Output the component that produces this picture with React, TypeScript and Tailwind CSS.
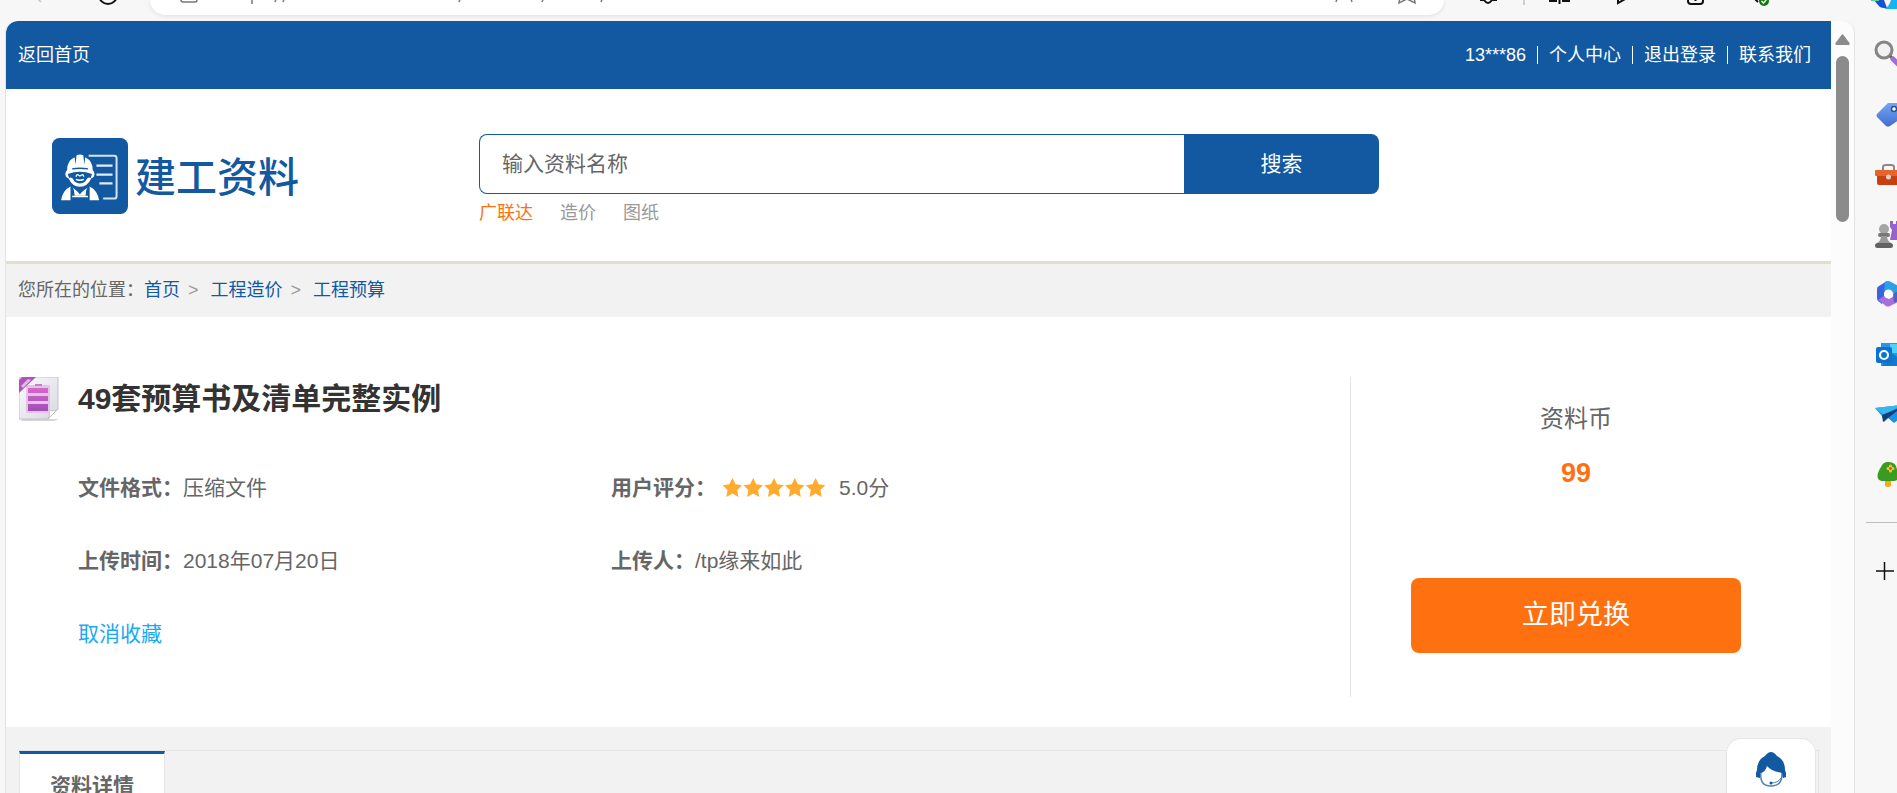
import { ReactNode } from 'react'

const ACCOUNT_LINKS = ['个人中心', '退出登录', '联系我们']
const HOT_WORDS = ['广联达', '造价', '图纸']
const CRUMBS = ['首页', '工程造价', '工程预算']

function BrowserBar() {
  return (
    <div className="flex h-[21px] shrink-0 overflow-hidden bg-[#f7f7f7]">
      <svg className="w-[150px] h-[21px] shrink-0" viewBox="0 0 150 21" fill="none">
        <path d="M38 -1 L41 2" stroke="#c4c4c4" strokeWidth="1.5" />
        <circle cx="108" cy="-5" r="9" stroke="#111" strokeWidth="2" />
      </svg>
      <div className="flex h-[15px] min-w-0 flex-1 overflow-hidden justify-between rounded-b-[18px] bg-white shadow-[0_1px_4px_rgba(0,0,0,0.1)]">
        <svg className="w-[480px] h-[15px] shrink-0" viewBox="150 0 480 15" fill="none" stroke="#777" strokeWidth="1.5">
          <path d="M181 -2 V0 Q181 2 183 2 H195 Q197 2 197 0 V-2" />
          <path d="M252 -2 V4 M277 -3 L275 2 M285 -3 L283 2 M461 -3 L459 2 M544 -3 L542 2 M603 -3 L601 2" />
        </svg>
        <svg className="w-[124px] h-[15px] shrink-0" viewBox="1320 0 124 15" fill="none" stroke="#777" strokeWidth="1.5">
          <path d="M1337 -1 L1336 2 M1351 -1 L1352 2" />
          <path d="M1400 -3 L1399 3 L1407 -1 L1415 3 L1414 -3" />
        </svg>
      </div>
      <svg className="w-[453px] h-[21px] shrink-0" viewBox="1444 0 453 21" fill="none" stroke="#111" strokeWidth="2">
        <path d="M1480 0 H1484 Q1486 3 1488 3 Q1490 3 1492 0 H1497" />
        <path d="M1524 0 V5" stroke="#cfcfcf" />
        <path d="M1549 1 H1557 M1562 1 H1570 M1559.5 0 V4" />
        <path d="M1618 -2 V3 L1627 -2" />
        <path d="M1688 -2 V1 Q1688 4 1691 4 H1700 Q1703 4 1703 1 V-2 M1695.5 -1 V1" />
        <path d="M1755 -1 L1758 2" />
        <circle cx="1764" cy="1" r="5" fill="#0f7b0f" stroke="none" />
        <path d="M1761.500 1 L1763.500 3 L1767 -1" stroke="#fff" strokeWidth="1.300" />
        <path d="M1874 0 H1884 L1887 8 H1884 Q1880 8 1878 5 Z" fill="#1a50d8" stroke="none" />
        <path d="M1871 0 H1879 V1 H1871 Z" fill="#57d5a0" stroke="none" />
        <path d="M1891 0 H1897 V9 H1884 Q1889 7 1891 0 Z" fill="#18b4f2" stroke="none" />
      </svg>
    </div>
  )
}

function Logo() {
  return (
    <a href="#home" className="flex items-center gap-[7px] text-[41px] leading-[60px] font-medium text-[#1259a1]">
      <svg className="size-[76px]" viewBox="19 19 226 226" fill="none">
        <rect x="19" y="19" width="226" height="226" rx="22" fill="#1259a1" />
        <path d="M128 72 H204 Q211 72 211 79 V192 Q211 199 204 199 H171" stroke="#d5e2ef" strokeWidth="6" />
        <path d="M151 101 H199 M151 128 H199 M160 154 H199" stroke="#e4edf5" strokeWidth="7" />
        <path d="M64 114 Q63 88 86 76 L89 98 L92 70 Q102 66 112 70 L115 98 L118 76 Q141 88 140 114 Q148 122 144 133 Q142 138 136 139 Q125 164 102 164 Q79 164 68 139 Q62 138 60 133 Q56 122 64 114 Z" fill="#fff" />
        <path d="M79 111 Q102 107 126 111" stroke="#1259a1" strokeWidth="4" />
        <path d="M66 126 Q102 113 138 126 L134 138 Q128 134 123 140 L118 148 Q102 160 86 148 L81 140 Q75 134 70 138 Z" fill="#1259a1" />
        <path d="M91 134 Q91 126 97 129 L102 132 L107 129 Q113 126 113 134 M90 142 Q102 147 114 142" stroke="#fff" strokeWidth="4" />
        <path d="M46 204 Q51 174 74 163 V204 Z M159 204 Q154 174 131 163 V204 Z" fill="#fff" />
        <path d="M80 166 Q85 170 86 191 H119 Q120 170 125 166 L102 184 Z" fill="#fff" />
        <path d="M84 162 L102 187 L120 162 Q102 174 84 162 Z" fill="#1259a1" />
        <path d="M79 193 H126" stroke="#fff" strokeWidth="4" />
      </svg>
      <span className="pt-1">建工资料</span>
    </a>
  )
}

function DocIcon() {
  return (
    <svg className="w-10 h-[44px] shrink-0" viewBox="0 0 40 44">
      <defs>
        <linearGradient id="paper" x1="0" y1="0" x2="1" y2="1">
          <stop offset="0" stopColor="#fbfafd" />
          <stop offset="1" stopColor="#d9d8e4" />
        </linearGradient>
        <linearGradient id="plum" x1="0" y1="0" x2="0" y2="1">
          <stop offset="0" stopColor="#d667c8" />
          <stop offset="1" stopColor="#a04fba" />
        </linearGradient>
      </defs>
      <path d="M3 42 H40 L35 44 H2 Z" fill="#d6d6d6" />
      <path d="M0 0 H39 V32 L29 42 H0 Z" fill="url(#paper)" stroke="#c3c2cc" />
      <path d="M29 42 Q32 37 30 33 Q36 35 39 32 Z" fill="#fff" stroke="#b6b8b8" strokeWidth=".8" />
      <rect x="7" y="8" width="24" height="28" rx="2" fill="#e3c3e6" />
      <path d="M9 11 H29 V16 H9 Z M9 19 H29 V24 H9 Z M9 27 H29 V34 H9 Z" fill="url(#plum)" />
      <path d="M16 7 H23 V9 H16 Z" fill="#c77fc9" />
      <path d="M0 3 L3 0 H17 L0 16 Z" fill="#b152b9" />
      <path d="M2 9 L9 2 L12 3 L4 11 Z" fill="#e6b8e6" />
    </svg>
  )
}

function Stars() {
  return (
    <svg className="w-[104px] h-5" viewBox="0 0 105 20" role="img" aria-label="5.0">
      {[0, 1, 2, 3, 4].map((i) => (
        <path
          key={i}
          transform={`translate(${i * 21} 0)`}
          d="M10.500 0 L13.600 6.300 L20.300 7.200 L15.400 11.900 L16.600 19 L10.500 15.600 L4.400 19 L5.600 11.900 L.7 7.200 L7.400 6.300 Z"
          fill="#ffab2e"
        />
      ))}
    </svg>
  )
}

function Field({ label, children }: { label: string; children: ReactNode }) {
  return (
    <div className="flex items-center">
      <dt className="font-bold">{label}：</dt>
      <dd className="flex items-center">{children}</dd>
    </div>
  )
}

function TopBar() {
  return (
    <nav className="flex h-[68px] shrink-0 items-center justify-between rounded-tl-[12px] bg-[#1259a1] pl-3 pr-[9px] text-[18px] leading-[18px] text-white">
      <a href="#home">返回首页</a>
      <div className="flex items-center">
        <a href="#account" className="px-[11px]">13***86</a>
        {ACCOUNT_LINKS.map((text) => (
          <a key={text} href="#account" className="border-l border-white px-[11px]">
            {text}
          </a>
        ))}
      </div>
    </nav>
  )
}

function SearchHeader() {
  return (
    <header className="flex h-[175px] shrink-0 border-b-[3px] border-[#e3dfd0] bg-white pl-[46px]">
      <div className="w-[427px] shrink-0 pt-[49px]">
        <Logo />
      </div>
      <div className="w-[900px] pt-[45px]">
        <form className="flex h-[60px]" onSubmit={(e) => e.preventDefault()}>
          <input
            type="text"
            aria-label="输入资料名称"
            placeholder="输入资料名称"
            className="min-w-0 flex-1 rounded-l-[8px] border border-r-0 border-[#1259a1] px-[22px] text-[21px] text-[#666] outline-none placeholder:text-[#666]"
          />
          <button type="submit" className="w-[195px] rounded-r-[8px] bg-[#1259a1] text-[21px] text-white">
            搜索
          </button>
        </form>
        <div className="flex gap-[27px] pt-[6px] text-[18px] leading-[27px] text-[#999]">
          {HOT_WORDS.map((word, i) => (
            <a key={word} href="#search" className={i === 0 ? 'text-[#ff7110]' : ''}>
              {word}
            </a>
          ))}
        </div>
      </div>
    </header>
  )
}

function Breadcrumb() {
  return (
    <div className="flex h-[53px] shrink-0 items-center bg-[#f2f2f2] pl-3 text-[18px] text-[#666]">
      您所在的位置：
      {CRUMBS.map((crumb, i) => (
        <span key={crumb} className="flex">
          {i > 0 && <span className="pl-2 pr-3 text-[#999]">&gt;</span>}
          <a href="#category" className="text-[#1259a1]">{crumb}</a>
        </span>
      ))}
    </div>
  )
}

function Detail() {
  return (
    <section className="flex h-[410px] shrink-0 bg-white pt-[60px] pb-[30px]">
      <div className="flex min-w-0 flex-1 pl-[13px]">
        <DocIcon />
        <div className="min-w-0 flex-1 pl-[19px]">
          <h1 className="text-[30px] leading-[44px] font-bold text-[#333]">49套预算书及清单完整实例</h1>
          <dl className="grid grid-cols-[533px_1fr] auto-rows-[73px] items-center pt-[30px] text-[21px] leading-[30px] text-[#666]">
            <Field label="文件格式">压缩文件</Field>
            <Field label="用户评分">
              <span className="flex items-center gap-[13px] pl-[6px]">
                <Stars />
                5.0分
              </span>
            </Field>
            <Field label="上传时间">2018年07月20日</Field>
            <Field label="上传人">/tp缘来如此</Field>
          </dl>
          <div className="flex h-[73px] items-center text-[21px]">
            <button type="button" className="text-[#1baaf2]">取消收藏</button>
          </div>
        </div>
      </div>
      <aside className="flex w-[481px] shrink-0 flex-col border-l border-[#e5e5e5] pr-[30px] text-center">
        <p className="pt-[24px] text-[24px] leading-[36px] text-[#666]">资料币</p>
        <p className="pt-[18px] text-[27px] leading-[36px] font-bold text-[#ff7110]">99</p>
        <button type="button" className="mx-[60px] mt-[87px] h-[75px] rounded-[8px] bg-[#ff7110] text-[27px] text-white">
          立即兑换
        </button>
      </aside>
    </section>
  )
}

function DetailTabs() {
  return (
    <section className="flex flex-1 bg-[#f2f2f2] pl-[13px] pr-3 pt-[23px]">
      <div className="flex flex-1 items-start border-t border-r border-[#e5e5e5]">
        <button
          type="button"
          className="h-[66px] w-[146px] border-x border-t-[3px] border-x-[#e5e5e5] border-t-[#1259a1] bg-white text-[21px] font-bold text-[#666]"
        >
          资料详情
        </button>
      </div>
    </section>
  )
}

function ServiceWidget() {
  return (
    <button
      type="button"
      aria-label="客服"
      className="absolute right-[15px] bottom-0 flex h-[55px] w-[90px] justify-center rounded-t-[15px] border border-b-0 border-[#e5e5e5] bg-white pt-[13px]"
    >
      <svg className="w-[30px] h-9" viewBox="0 0 30 36">
        <path d="M5 20 Q3 34 15 34 Q27 34 26 20" fill="#fff" stroke="#4d83b8" strokeWidth="1.500" />
        <path d="M0 25 V21 L1 18 Q1 8 9 4 Q12 0 15 0 Q18 0 21 4 Q29 8 29 18 L30 21 V25 L27 26 L26 21 Q15 19 11 14 Q9 21 4 21 L4 26 Z" fill="#1259a1" />
        <path d="M25 26 Q22 31 15 31" fill="none" stroke="#4d83b8" />
        <circle cx="15" cy="31" r="1.500" fill="#1259a1" />
      </svg>
    </button>
  )
}

function Scrollbar() {
  return (
    <div className="flex w-6 shrink-0 flex-col items-center rounded-tr-[12px] border-r border-[#e3e3e3] bg-[#fcfcfc] pt-[13px]">
      <svg className="w-[15px] h-[11px]" viewBox="0 0 15 11">
        <path d="M6.500 1 Q7.500 -.3 8.500 1 L14.500 9 Q15 11 13.500 11 H1.500 Q0 11 .5 9 Z" fill="#8b8b8b" />
      </svg>
      <div className="mt-[11px] h-[166px] w-[13px] rounded-full bg-[#8b8b8b]" />
    </div>
  )
}

function SideIcon({ children }: { children: ReactNode }) {
  return (
    <svg className="ml-[17px] h-[60px] w-[30px] shrink-0" viewBox="0 0 30 60" fill="none">
      {children}
    </svg>
  )
}

function EdgeSidebar() {
  return (
    <div className="flex w-[42px] shrink-0 flex-col overflow-hidden bg-[#f7f7f7] pt-[3px]">
      <SideIcon>
        <circle cx="12" cy="26" r="8" stroke="#858585" strokeWidth="3" fill="#f2f2f2" />
        <path d="M18 32 L21 35" stroke="#666" strokeWidth="3" />
        <path d="M21 35 L27 41" stroke="#a56bdd" strokeWidth="5" strokeLinecap="round" />
      </SideIcon>
      <SideIcon>
        <path d="M16 19 H30 V34 L18 42 Q16 43 14 42 L5 33 Q4 31 5 30 Z" fill="url(#tag)" />
        <circle cx="22" cy="25" r="2.500" fill="#fff" stroke="#294e9c" strokeWidth="1.500" />
        <defs>
          <linearGradient id="tag" x1="0" y1="0" x2="0" y2="1">
            <stop stopColor="#76a4f1" />
            <stop offset="1" stopColor="#416dd1" />
          </linearGradient>
        </defs>
      </SideIcon>
      <SideIcon>
        <path d="M11 27 V23 Q11 21 14 21 H19 Q22 21 22 23 V27" stroke="#888" strokeWidth="2" />
        <path d="M5 29 H30 V41 H7 Q5 41 5 39 Z" fill="#c8400f" />
        <rect x="3" y="26" width="30" height="6" rx="1" fill="#e8622a" />
        <circle cx="16.500" cy="33" r="2.500" fill="#d4d4d4" />
      </SideIcon>
      <SideIcon>
        <path d="M18 17 H21 V20 H24 V17 H28 V20 H30 V36 H18 L20 26 L18 23 Z" fill="#9563c9" />
        <circle cx="12" cy="25" r="5" fill="#a5a5a5" />
        <rect x="6" y="29" width="12" height="4" rx="2" fill="#777" />
        <path d="M9 32 H15 Q15 37 19 39 H5 Q9 37 9 32 Z" fill="#989898" />
        <rect x="3" y="39" width="18" height="5" rx="2.500" fill="#626262" />
      </SideIcon>
      <SideIcon>
        <path d="M5 25 Q5 23 7 22 L15 17 L16 26 L12 29 V34 L10 40 L6 37 Q5 36 5 34 Z" fill="#3a63dc" />
        <path d="M13 18 Q16 16 19 18 L28 23 V32 L20 29 L16 26 L12 28 Z" fill="#2b9fe8" />
        <path d="M6 36 L12 32 L17 35 L28 28 V35 Q28 37 26 38 L18 42 Q16 43 14 42 Z" fill="#a66fdc" />
        <path d="M21 30 L28 26 V36 L22 39 Z" fill="#585bc9" />
        <circle cx="16.500" cy="30" r="4.500" fill="#fff" />
      </SideIcon>
      <SideIcon>
        <path d="M9 19 H30 V42 H9 Z" fill="#2997e2" />
        <path d="M18 20 H30 V29 H18 Z" fill="#51d0fb" />
        <path d="M18 28 L30 36 V42 H10 Z" fill="#1479ce" />
        <rect x="4" y="23" width="16" height="16" rx="2" fill="#0873d1" />
        <circle cx="12" cy="31" r="4" stroke="#fff" strokeWidth="2.200" />
      </SideIcon>
      <SideIcon>
        <path d="M3 24 L30 21 V33 L22 39 L16 34 L12 38 L10 32 Z" fill="#1c91e2" />
        <path d="M3 24 L30 21 L12 31 Z" fill="#36b6ee" />
        <path d="M10 31 L30 23 L16 34 L11 38 Z" fill="#123f78" />
      </SideIcon>
      <SideIcon>
        <path d="M13 36 H19 V42 Q16 44 13 42 Z" fill="#f2aa16" />
        <path d="M9 23 Q11 18 16 18 Q22 18 24 22 L26 29 Q28 38 20 37 H10 Q4 36 6 29 Q7 26 9 23 Z" fill="#399b22" />
        <path d="M18.500 22 V27 M16 24.500 H21" stroke="#ffc329" strokeWidth="3" strokeLinecap="round" />
        <circle cx="18.500" cy="24.500" r="1.300" fill="#d33d11" />
      </SideIcon>
      <div className="ml-[11px] mt-[18px] h-px shrink-0 bg-[#bdbdbd]" />
      <SideIcon>
        <path d="M12.500 39 V57 M4 48 H22" stroke="#111" strokeWidth="1.500" />
      </SideIcon>
    </div>
  )
}

export default function App() {
  return (
    <div className="flex h-screen flex-col overflow-hidden bg-[#f7f7f7] font-['Liberation_Sans','Noto_Sans_CJK_SC',sans-serif]">
      <BrowserBar />
      <div className="flex min-h-0 flex-1">
        <main className="relative ml-[5px] flex min-w-0 flex-1 flex-col overflow-hidden rounded-tl-[12px] border-l border-[#e3e3e3]">
          <TopBar />
          <SearchHeader />
          <Breadcrumb />
          <Detail />
          <DetailTabs />
          <ServiceWidget />
        </main>
        <Scrollbar />
        <EdgeSidebar />
      </div>
    </div>
  )
}
